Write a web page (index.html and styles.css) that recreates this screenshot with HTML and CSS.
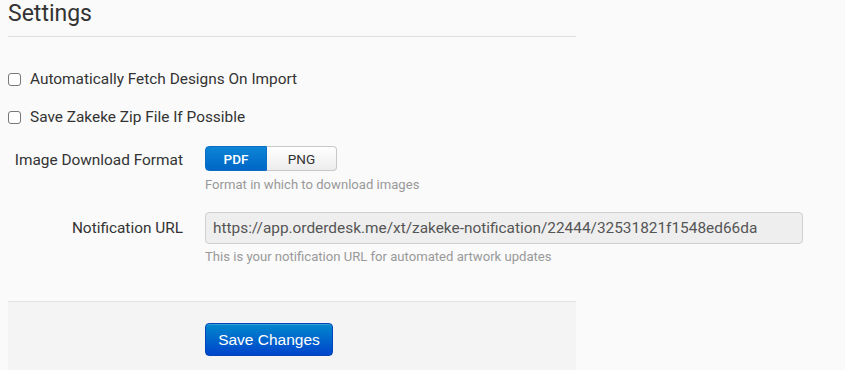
FILE: index.html
```html
<!DOCTYPE html>
<html>
<head>
<meta charset="utf-8">
<link rel="stylesheet" href="styles.css">
</head>
<body>
<div class="page">
  <h1 class="title">Settings</h1>
  <div class="checks">
    <label class="check"><span class="box"></span><span>Automatically Fetch Designs On Import</span></label>
    <label class="check"><span class="box"></span><span>Save Zakeke Zip File If Possible</span></label>
  </div>
  <div class="field field-format">
    <div class="label">Image Download Format</div>
    <div class="controls">
      <div class="btn-group">
        <span class="seg seg-active">PDF</span>
        <span class="seg">PNG</span>
      </div>
      <div class="help">Format in which to download images</div>
    </div>
  </div>
  <div class="field field-url">
    <div class="label">Notification URL</div>
    <div class="controls">
      <div class="input">https://app.orderdesk.me/xt/zakeke-notification/22444/32531821f1548ed66da</div>
      <div class="help">This is your notification URL for automated artwork updates</div>
    </div>
  </div>
  <div class="actions">
    <button class="save">Save Changes</button>
  </div>
</div>
</body>
</html>
```

FILE: styles.css
```css
html, body {
  margin: 0;
  padding: 0;
  background: #fafafa;
  font-family: Roboto, "Liberation Sans", sans-serif;
  color: #333;
}
.page {
  padding: 0 0 0 8px;
  height: 370px;
  display: flex;
  flex-direction: column;
}
.title {
  width: 568px;
  margin: 0;
  font-size: 23px;
  font-weight: 400;
  line-height: 28px;
  padding-bottom: 8px;
  border-bottom: 1px solid #e0e0e0;
}
.checks {
  display: flex;
  flex-direction: column;
  gap: 18px;
  padding-top: 32px;
}
.check {
  display: flex;
  align-items: center;
  gap: 9px;
  font-size: 15.4px;
  line-height: 20px;
  height: 20px;
}
.box {
  width: 11px;
  height: 11px;
  border: 1px solid #777;
  border-radius: 3px;
  background: #fff;
}
.field {
  display: grid;
  grid-template-columns: 175px auto;
  column-gap: 22px;
}
.field-format { margin-top: 19px; }
.field-url { margin-top: 19px; }
.label {
  text-align: right;
  font-size: 15.4px;
  line-height: 20px;
}
.field-format .label { padding-top: 4px; }
.field-url .label { padding-top: 6px; }
.btn-group {
  display: flex;
  width: 132px;
  height: 25px;
}
.seg {
  display: flex;
  align-items: center;
  justify-content: center;
  font-size: 13.5px;
  box-sizing: border-box;
  height: 25px;
  width: 70px;
  border: 1px solid #c8c8c8;
  border-left: none;
  border-radius: 0 4px 4px 0;
  background: linear-gradient(#ffffff, #ececec);
  color: #333;
}
.seg-active {
  width: 62px;
  border: 1px solid #0a6fc4;
  border-radius: 4px 0 0 4px;
  background: linear-gradient(#0c85d6, #0066c6);
  color: #fff;
  font-weight: 500;
}
.help {
  font-size: 13.1px;
  line-height: 16px;
  color: #999;
  margin-top: 6px;
}
.input {
  box-sizing: border-box;
  width: 598px;
  height: 32px;
  border: 1px solid #cfcfcf;
  border-radius: 4px;
  background: #eeeeee;
  color: #555;
  font-size: 15.4px;
  line-height: 30px;
  padding: 0 7px;
  white-space: nowrap;
}
.field-url .help { margin-top: 5px; }
.actions {
  margin-top: auto;
  width: 568px;
  height: 69px;
  box-sizing: border-box;
  border-top: 1px solid #e2e2e2;
  background: #f4f4f4;
  padding: 21px 0 0 197px;
}
.save {
  width: 128px;
  height: 33px;
  border: 1px solid #0046b8;
  border-radius: 4px;
  background: linear-gradient(#0088cc, #0044cc);
  color: #fff;
  font-family: "Liberation Sans", Arial, sans-serif;
  font-size: 15.5px;
  padding: 0;
  box-shadow: inset 0 1px 0 rgba(255,255,255,0.2);
}
```
